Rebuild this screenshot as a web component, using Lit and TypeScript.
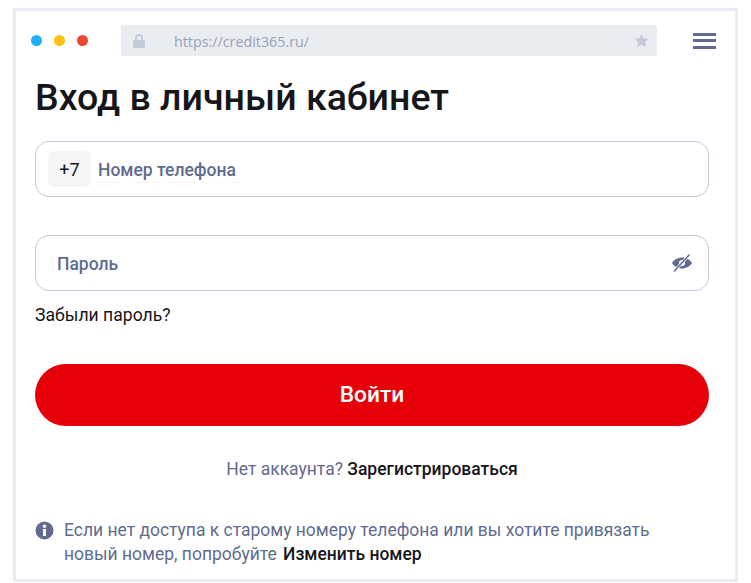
import { html, css, LitElement } from 'lit';
import { customElement } from 'lit/decorators.js';

@customElement('app-root')
export class AppRoot extends LitElement {
  static styles = css`
    :host {
      display: block;
      height: 583px;
      overflow: hidden;
      background: #fff;
      font-family: 'Roboto', sans-serif;
      color: #16161a;
    }

    .frame {
      box-sizing: border-box;
      width: 725px;
      height: 574px;
      margin: 8px 0 0 13px;
      border: 3px solid #e9ecf0;
      padding: 14px 26px 0 19px;
    }

    .toolbar {
      display: flex;
      align-items: center;
      height: 31px;
      margin-right: -7px;
    }

    .dots {
      display: flex;
      gap: 12px;
      margin-left: -4px;
      width: 90px;
    }

    .dots span {
      width: 11px;
      height: 11px;
      border-radius: 50%;
    }

    .url {
      box-sizing: border-box;
      display: flex;
      align-items: center;
      width: 536px;
      height: 31px;
      border-radius: 3px;
      background: #e9ecf0;
      padding: 0 8px 0 12px;
      font-family: 'Open Sans', sans-serif;
      font-size: 14.3px;
      color: #98a2b8;
    }

    .url .text {
      flex: 1;
      margin-left: 29px;
      padding-top: 2px;
    }

    .burger {
      display: flex;
      flex-direction: column;
      gap: 3.500px;
      margin-left: 36px;
    }

    .burger span {
      width: 23px;
      height: 3px;
      background: #616b8f;
    }

    h1 {
      margin: 17px 0 0;
      font-size: 37.500px;
      line-height: 48px;
      font-weight: 500;
    }

    .field {
      box-sizing: border-box;
      display: flex;
      align-items: center;
      height: 56px;
      border: 1px solid #c3c9dc;
      border-radius: 14px;
      font-size: 17.500px;
      font-weight: 500;
      color: #616b8f;
    }

    .placeholder {
      position: relative;
      padding-top: 1px;
    }

    .phone {
      margin-top: 20px;
      padding-left: 12px;
    }

    .phone .placeholder::after {
      content: '';
      position: absolute;
      left: -3px;
      bottom: -3px;
      width: 145px;
      height: 1px;
      background: linear-gradient(
        to right,
        #feefe9 0 25px,
        transparent 25px 38px,
        #feefe9 38px 67px,
        transparent 67px 72px,
        #feefe9 72px 100px,
        transparent 100px 106px,
        #feefe9 106px 112px,
        transparent 112px 120px,
        #feefe9 120px 126px,
        transparent 126px 134px,
        #feefe9 134px 145px
      );
    }

    .code {
      display: flex;
      align-items: center;
      justify-content: center;
      width: 43px;
      height: 36px;
      border-radius: 6px;
      background: #f5f5f8;
      color: #16161a;
      font-size: 18px;
      font-weight: 400;
      margin-right: 7px;
    }

    .password {
      margin-top: 38px;
      padding: 0 15px 0 21px;
      justify-content: space-between;
    }

    .forgot {
      margin-top: 14px;
      font-size: 17.600px;
      line-height: 20px;
    }

    .submit {
      display: flex;
      align-items: center;
      justify-content: center;
      margin-top: 39px;
      height: 60px;
      padding-bottom: 2px;
      border-radius: 31px;
      background: #e60008;
      color: #fff;
      font-size: 22.700px;
      font-weight: 500;
    }

    .register {
      margin-top: 32px;
      text-align: center;
      font-size: 17.500px;
      line-height: 22px;
      color: #616b8f;
    }

    .link {
      color: #16161a;
      font-weight: 500;
    }

    .info {
      display: flex;
      gap: 10px;
      margin-top: 38px;
      font-size: 17.480px;
      line-height: 24px;
      color: #616b8f;
    }

    .info svg {
      flex: none;
      margin-top: 3px;
    }

    .info .link {
      margin-left: 2px;
    }
  `;

  render() {
    return html`
      <div class="frame">
        <div class="toolbar">
          <div class="dots">
            <span style="background:#1eb0fb"></span>
            <span style="background:#ffc20e"></span>
            <span style="background:#ef4631"></span>
          </div>
          <div class="url">
            <svg width="12" height="14" viewBox="0 0 12 14">
              <path
                fill="#c3cadb"
                d="M1 6h1V4a4 4 0 0 1 8 0v2h1a1 1 0 0 1 1 1v6a1 1 0 0 1-1 1H1a1 1 0 0 1-1-1V7a1 1 0 0 1 1-1zm2.800 0h4.400V4a2.200 2.200 0 0 0-4.400 0z"
              />
            </svg>
            <span class="text">https://credit365.ru/</span>
            <svg width="15" height="15" viewBox="0 0 24 24">
              <path fill="#c3cadb" d="M12 1l3.400 7.300 7.900 1-5.800 5.500 1.500 7.900L12 18.800l-7 3.900 1.500-7.900L.7 9.300l7.900-1z" />
            </svg>
          </div>
          <div class="burger"><span></span><span></span><span></span></div>
        </div>

        <h1>Вход в личный кабинет</h1>

        <div class="field phone">
          <span class="code">+7</span>
          <span class="placeholder">Номер телефона</span>
        </div>

        <div class="field password">
          <span class="placeholder">Пароль</span>
          <svg width="22" height="20" viewBox="0 0 22 20">
            <path
              fill="#616b8f"
              fill-rule="evenodd"
              d="M11 4.500c4.300 0 8 2.300 10 5.500-2 3.200-5.700 5.500-10 5.500S3 13.200 1 10c2-3.200 5.700-5.500 10-5.500zm0 2.500a3 3 0 1 0 0 6 3 3 0 0 0 0-6z"
            />
            <path stroke="#fff" stroke-width="2.800" d="M18.500 1.500 3 18.500" />
            <path stroke="#616b8f" stroke-width="1.500" d="M18.500 1.500 3 18.500" />
          </svg>
        </div>

        <div class="forgot">Забыли пароль?</div>

        <div class="submit">Войти</div>

        <div class="register">Нет аккаунта? <span class="link">Зарегистрироваться</span></div>

        <div class="info">
          <svg width="19" height="19" viewBox="0 0 19 19">
            <circle cx="9.500" cy="9.500" r="9" fill="#616b8f" />
            <rect x="8" y="8" width="3" height="7" fill="#fff" />
            <circle cx="9.500" cy="5.200" r="1.700" fill="#fff" />
          </svg>
          <div>
            Если нет доступа к старому номеру телефона или вы хотите привязать<br />
            новый номер, попробуйте <span class="link">Изменить номер</span>
          </div>
        </div>
      </div>
    `;
  }
}
